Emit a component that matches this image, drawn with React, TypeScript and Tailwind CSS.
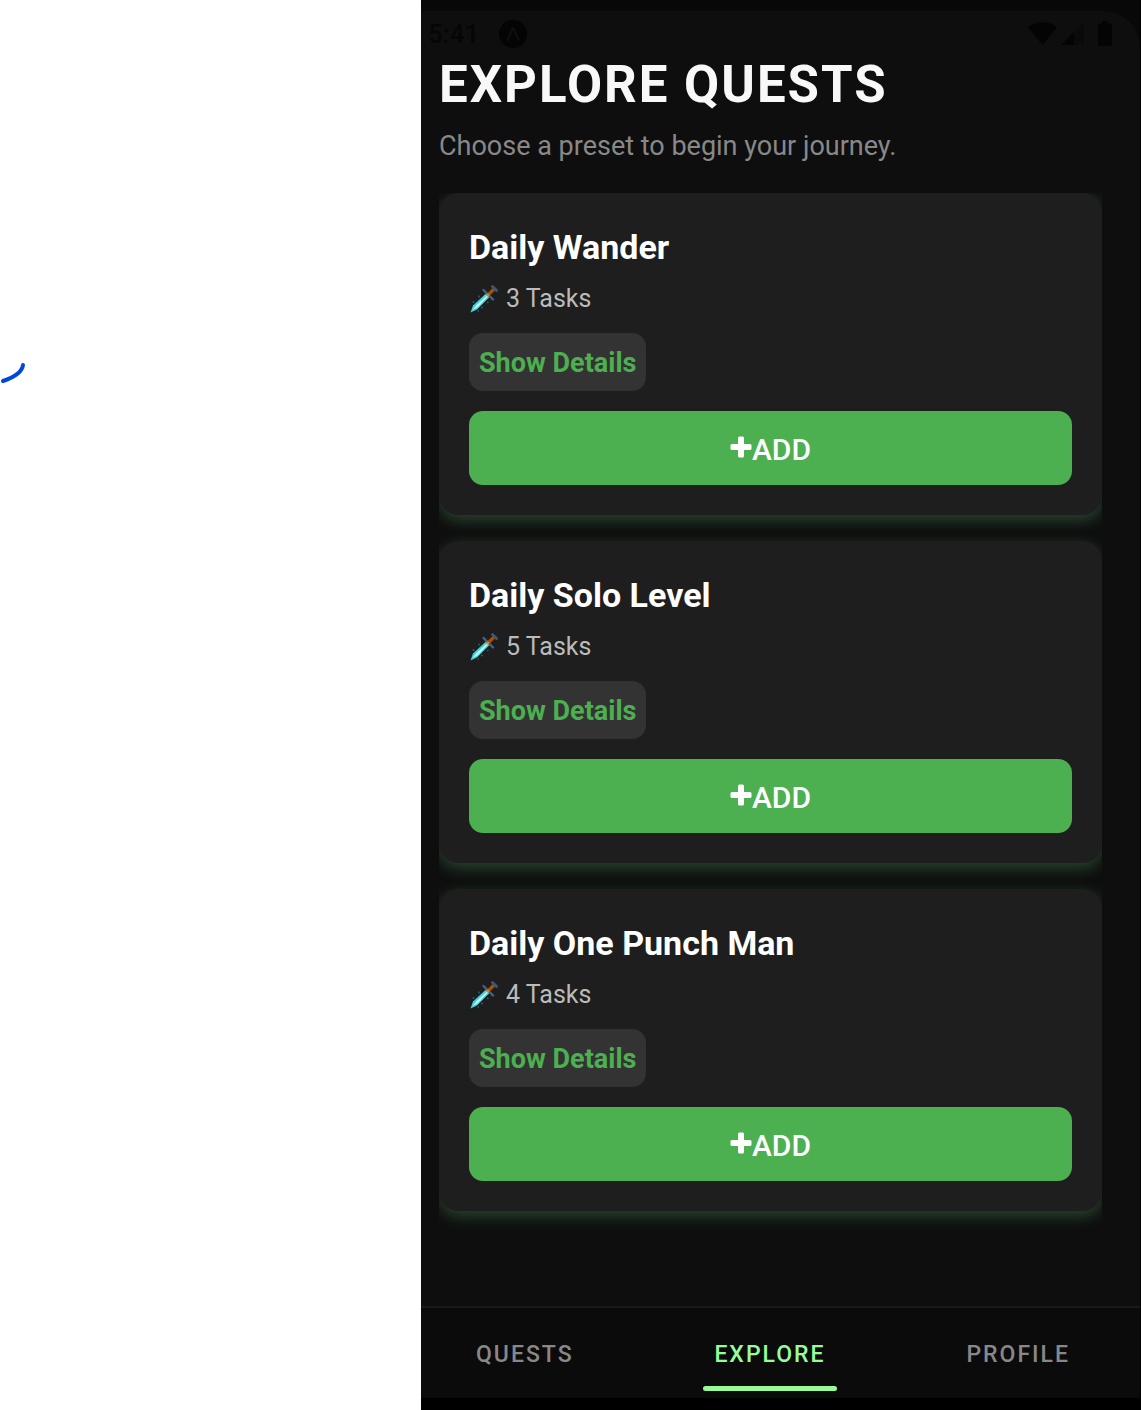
import React from "react";

const quests = [
  { name: "Daily Wander", tasks: 3 },
  { name: "Daily Solo Level", tasks: 5 },
  { name: "Daily One Punch Man", tasks: 4 },
];

const tabs = ["QUESTS", "EXPLORE", "PROFILE"];

function Sword() {
  return (
    <svg width="30" height="30" viewBox="0 0 30 30" aria-hidden="true">
      <path d="M1.500 28.500 4 21.500 17.500 9 21 12.500 8 25.500Z" fill="#45cfdb" />
      <path d="M3.500 26 7.500 21 18.500 11 19.500 12 8.500 23.500Z" fill="#b5fff4" />
      <path d="M19 11 25 5" stroke="#a4510c" strokeWidth="3.200" />
      <path d="M14.500 6 24 15.500" stroke="#3e6585" strokeWidth="2.400" strokeLinecap="round" />
      <path d="M23.500 2.500 27.500 6.500" stroke="#3e5770" strokeWidth="3" strokeLinecap="round" />
      <circle cx="18.800" cy="11" r="1.500" fill="#d98a22" />
      <path d="M10 11.500v2M4.500 17v2M12 23.500h2M8.500 27h1.500M18 18.500h1.500" stroke="#246170" strokeWidth="1.500" />
    </svg>
  );
}

function Plus() {
  return (
    <svg className="mb-1" width="22" height="22" viewBox="0 0 22 22" fill="white" aria-hidden="true">
      <rect x="8" y="0.500" width="6" height="21" rx="1.500" />
      <rect x="0.500" y="8" width="21" height="6" rx="1.500" />
    </svg>
  );
}

function StatusBar() {
  return (
    <div className="flex h-11 items-center justify-between rounded-tr-[36px] bg-[#0e0e0e] pt-0.5 pl-[7px] pr-7 text-[#060606]">
      <div className="flex items-center gap-5">
        <span className="text-[26px] leading-10 font-medium">5:41</span>
        <svg width="28" height="28" viewBox="0 0 28 28" aria-hidden="true">
          <circle cx="14" cy="14" r="14" fill="#040404" />
          <path d="M8.500 19.500C11 17 12.500 8.500 14 8.500S17 17 19.500 19.500" fill="none" stroke="#0e0e0e" strokeWidth="2.500" strokeLinecap="round" />
        </svg>
      </div>
      <svg width="84" height="26" viewBox="0 0 84 26" aria-hidden="true">
        <path d="M0 6C8-.5 21-.5 29 6L14.500 24Z" fill="#040404" />
        <path d="M33 24 56 1V24Z" fill="#0a0a0a" />
        <path d="M33 24 46 11V24Z" fill="#040404" />
        <path d="M74 0h6v2.500h4V23q0 2-2 2H72q-2 0-2-2V2.500h4Z" fill="#040404" />
      </svg>
    </div>
  );
}

function QuestCard({ name, tasks }: { name: string; tasks: number }) {
  return (
    <li className="rounded-[20px] bg-[#1e1e1e] px-[30px] pt-8 pb-[30px] shadow-[0_5px_16px_rgba(100,190,120,0.32)]">
      <h2 className="text-[34px] leading-11 font-bold text-white">{name}</h2>
      <p className="mt-[13px] flex items-center gap-[7px] text-[25px] leading-[34px] text-[#bbbbbb]">
        <Sword />
        {tasks} Tasks
      </p>
      <button className="mt-[17px] block rounded-[14px] bg-[#333333] px-[10px] pt-[13px] pb-[11px] text-[27px] leading-[34px] font-bold text-[#4caf50]">
        Show Details
      </button>
      <button className="mt-5 flex h-[74px] w-full items-center justify-center rounded-[14px] bg-[#4caf50] pt-0.5 text-[30px] font-medium text-white">
        <Plus />
        ADD
      </button>
    </li>
  );
}

export default function App() {
  return (
    <div className="flex min-h-screen bg-white font-['Roboto',sans-serif]">
      <aside className="w-[421px] shrink-0 pt-[362px]">
        <svg width="26" height="22" viewBox="0 0 26 22" aria-hidden="true">
          <path d="M3 19C12 16 22 11 23 3" fill="none" stroke="#0047e0" strokeWidth="4" strokeLinecap="round" />
        </svg>
      </aside>
      <div className="flex min-w-0 flex-1 flex-col border-r border-black bg-[#080808] pt-[11px]">
        <StatusBar />
        <main className="flex-1 bg-[#0e0e0e] pr-[38px] pl-[18px]">
          <h1 className="text-[51px] leading-[60px] font-bold tracking-[2px] text-[#f8f8f8]">EXPLORE QUESTS</h1>
          <p className="mt-[14px] text-[27px] leading-[34px] text-[#888888]">Choose a preset to begin your journey.</p>
          <ul className="mt-[30px] flex flex-col gap-[26px] overflow-hidden pb-6">
            {quests.map((quest) => (
              <QuestCard key={quest.name} {...quest} />
            ))}
          </ul>
        </main>
        <nav className="flex h-[92px] justify-between border-t-2 border-[#1a1a1a] bg-[#0b0b0b] pr-[59px] pl-[44px]">
          {tabs.map((tab) => (
            <a
              key={tab}
              href={"#" + tab.toLowerCase()}
              className={
                tab === "EXPLORE"
                  ? "flex flex-col items-stretch pt-8 text-[23px] leading-[30px] font-medium tracking-[2px] text-[#98fb98]"
                  : "flex flex-col items-stretch pt-8 text-[23px] leading-[30px] font-medium tracking-[2px] text-[#888888]"
              }
            >
              <span className="px-[11px]">{tab}</span>
              {tab === "EXPLORE" && <span className="mt-4 h-[5px] rounded-full bg-[#98fb98]" />}
            </a>
          ))}
        </nav>
        <div className="h-3 bg-black" />
      </div>
    </div>
  );
}
